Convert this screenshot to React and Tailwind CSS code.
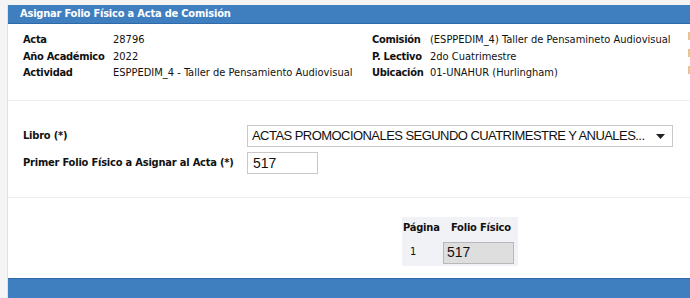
import React from 'react';

const tahoma = { fontFamily: '"DejaVu Sans Condensed", "DejaVu Sans", Verdana, sans-serif' };
const arial = { fontFamily: '"Liberation Sans", Arial, sans-serif' };

function InfoRow({ label, value, labelWidth }) {
  return (
    <div className="flex h-[16.5px] items-center">
      <span className={`font-bold tracking-[-0.3px] ${labelWidth}`}>{label}</span>
      <span>{value}</span>
    </div>
  );
}

export default function App() {
  return (
    <div className="w-[690px] h-[298px] overflow-hidden bg-[#f4f4f4] pt-[5px] pl-[7px] text-[#111]" style={tahoma}>
      <div className="h-full bg-white border-l border-[#e2e2e2] flex flex-col">
        {/* Header */}
        <div className="h-[19px] bg-[#3f7fc0] border-b border-[#2f6aa8] text-white font-bold text-[11px] tracking-[-0.2px] pl-[12px] flex items-center">
          Asignar Folio Físico a Acta de Comisión
        </div>

        {/* Datos del acta */}
        <div className="relative flex pt-[8px] pl-[15px] text-[11px] h-[77px] border-b border-[#eeeeee]">
          <div className="w-[349px]">
            <InfoRow label="Acta" value="28796" labelWidth="w-[90px]" />
            <InfoRow label="Año Académico" value="2022" labelWidth="w-[90px]" />
            <InfoRow label="Actividad" value="ESPPEDIM_4 - Taller de Pensamiento Audiovisual" labelWidth="w-[90px]" />
          </div>
          <div>
            <InfoRow label="Comisión" value="(ESPPEDIM_4) Taller de Pensamineto Audiovisual" labelWidth="w-[58px]" />
            <InfoRow label="P. Lectivo" value="2do Cuatrimestre" labelWidth="w-[58px]" />
            <InfoRow label="Ubicación" value="01-UNAHUR (Hurlingham)" labelWidth="w-[58px]" />
          </div>
          <div className="absolute right-0 top-[8px] flex flex-col gap-[9px]">
            <span className="block w-[2px] h-[8px] bg-[#e3c78f]" />
            <span className="block w-[2px] h-[8px] bg-[#e3c78f]" />
            <span className="block w-[2px] h-[8px] bg-[#e3c78f]" />
          </div>
        </div>

        {/* Formulario */}
        <div className="pt-[24px] pl-[15px] h-[97px] border-b border-[#eeeeee] text-[11px]">
          <div className="flex items-center h-[22px]">
            <span className="font-bold tracking-[-0.2px] w-[224px]">Libro (*)</span>
            <div className="w-[426px] h-[22px] border border-[#c8c8c8] bg-white flex items-center justify-between pl-[4px] pr-[7px] text-[13px] tracking-[-0.55px] whitespace-nowrap overflow-hidden" style={arial}>
              <span>ACTAS PROMOCIONALES SEGUNDO CUATRIMESTRE Y ANUALES...</span>
              <svg className="shrink-0" width="9" height="5" viewBox="0 0 9 5"><path d="M0 0h9L4.5 5z" fill="#222" /></svg>
            </div>
          </div>
          <div className="flex items-center h-[22px] mt-[5px]">
            <span className="font-bold tracking-[-0.2px] w-[224px]">Primer Folio Físico a Asignar al Acta (*)</span>
            <div className="w-[71px] h-[22px] border border-[#c8c8c8] bg-white flex items-center pl-[5px] text-[14px]" style={arial}>
              517
            </div>
          </div>
        </div>

        {/* Tabla de folios */}
        <div className="flex-1 flex flex-col">
          <div className="pl-[394px] pt-[19px]">
            <table className="bg-[#f0f2f5] text-[11px] border-collapse table-fixed w-[116px]">
              <thead>
                <tr className="h-[22px]">
                  <th className="w-[40px] text-left font-bold tracking-[-0.2px] pl-[1px]">Página</th>
                  <th className="w-[76px] text-left font-bold tracking-[-0.2px] pl-[9px]">Folio Físico</th>
                </tr>
              </thead>
              <tbody>
                <tr className="h-[27px]">
                  <td className="pl-[8px]">1</td>
                  <td className="pl-[1px]">
                    <div className="w-[71px] h-[22px] border border-[#b8b8b8] bg-[#dedede] flex items-center pl-[3px] text-[14px]" style={arial}>
                      517
                    </div>
                  </td>
                </tr>
              </tbody>
            </table>
          </div>
          <div className="mt-auto h-[20px] bg-[#3f7fc0] border-t border-[#2f6aa8]" />
        </div>
      </div>
    </div>
  );
}
